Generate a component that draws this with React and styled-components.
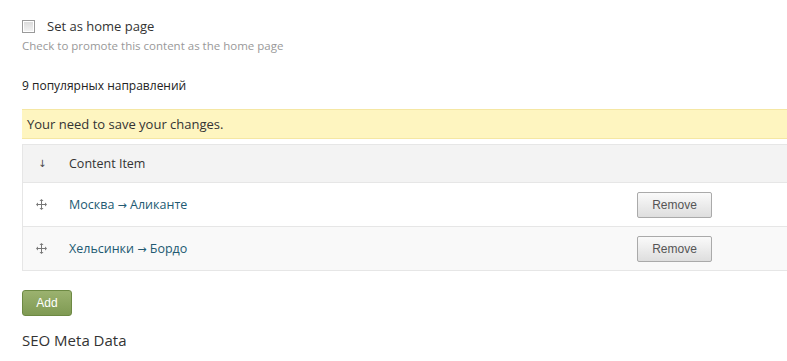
import styled, { createGlobalStyle } from "styled-components";

const GlobalStyle = createGlobalStyle`
  html, body {
    margin: 0;
    padding: 0;
    background: #fff;
    overflow: hidden;
  }
  body {
    font-family: "Open Sans", "Noto Sans", sans-serif;
    color: #333;
  }
`;

const Page = styled.div`
  padding: 17px 0 0 22px;
  width: 800px;
`;

const CheckRow = styled.label`
  display: flex;
  align-items: center;
  gap: 12px;
  height: 18px;
  font-size: 13px;
  color: #333;
`;

const Check = styled.input`
  appearance: none;
  margin: 0;
  width: 13px;
  height: 13px;
  border: 1px solid #9a9a9a;
  background: linear-gradient(#d9d9d9, #f4f4f4);
  box-shadow: inset 0 0 0 1px #fff;
  box-sizing: border-box;
`;

const Description = styled.div`
  margin-top: 2px;
  font-size: 11.5px;
  line-height: 18px;
  color: #999;
`;

const Heading = styled.div`
  margin-top: 22px;
  font-size: 12px;
  line-height: 18px;
  color: #222;
`;

const Warning = styled.div`
  margin-top: 14px;
  height: 30px;
  box-sizing: border-box;
  display: flex;
  align-items: center;
  padding-left: 5px;
  background: #fef5c0;
  border-top: 1px solid #f5e7a3;
  border-bottom: 1px solid #f5e7a3;
  font-size: 13px;
  color: #333;
`;

const Table = styled.div`
  margin-top: 5px;
  border-left: 1px solid #e6e6e6;
  border-bottom: 1px solid #e6e6e6;
`;

const Row = styled.div`
  display: flex;
  align-items: center;
  box-sizing: border-box;
  height: ${(p) => (p.$head ? 38 : 44)}px;
  background: ${(p) => p.$bg};
  border-top: 1px solid #e6e6e6;
  font-size: 12.5px;
`;

const HandleCell = styled.div`
  width: 46px;
  display: flex;
  padding-left: ${(p) => (p.$head ? 15 : 13)}px;
  box-sizing: border-box;
  color: #444;
  font-family: "DejaVu Sans", sans-serif;
  font-size: 10px;
`;

const TitleCell = styled.div`
  flex: 1;
  color: ${(p) => (p.$link ? "#225a72" : "#333")};
`;

const Arrow = styled.span`
  font-family: "DejaVu Sans", sans-serif;
  font-size: 11px;
`;

const ActionCell = styled.div`
  width: 185px;
`;

const Button = styled.button`
  font-family: "Liberation Sans", Arial, sans-serif;
  font-size: 12px;
  height: 26px;
  border-radius: 2px;
  cursor: pointer;
  padding: 0;
`;

const RemoveButton = styled(Button)`
  width: 75px;
  color: #555;
  border: 1px solid #aaa;
  background: linear-gradient(#fafafa, #dedede);
`;

const AddButton = styled(Button)`
  margin-top: 19px;
  width: 50px;
  color: #fff;
  border: 1px solid #6d8943;
  border-radius: 3px;
  background: linear-gradient(#9bb26f, #7f9a53);
`;

const SectionTitle = styled.div`
  margin-top: 14px;
  font-size: 15px;
  line-height: 20px;
  color: #333;
`;

const DragIcon = () => (
  <svg width="11" height="11" viewBox="0 0 11 11" fill="#777">
    <rect x="5" y="1" width="1" height="9" />
    <rect x="1" y="5" width="9" height="1" />
    <path d="M5.5 0 L7.5 2 L3.5 2 Z" />
    <path d="M5.5 11 L7.5 9 L3.5 9 Z" />
    <path d="M0 5.5 L2 3.5 L2 7.5 Z" />
    <path d="M11 5.5 L9 3.5 L9 7.5 Z" />
  </svg>
);

const items = [
  ["Москва", "Аликанте"],
  ["Хельсинки", "Бордо"],
];

export default function App() {
  return (
    <>
      <GlobalStyle />
      <Page>
        <CheckRow>
          <Check type="checkbox" />
          Set as home page
        </CheckRow>
        <Description>Check to promote this content as the home page</Description>
        <Heading>9 популярных направлений</Heading>
        <Warning>Your need to save your changes.</Warning>
        <Table>
          <Row $head $bg="#f3f3f3">
            <HandleCell $head>↓</HandleCell>
            <TitleCell>Content Item</TitleCell>
          </Row>
          {items.map(([from, to], i) => (
            <Row key={from} $bg={i % 2 ? "#f9f9f9" : "#fff"}>
              <HandleCell>
                <DragIcon />
              </HandleCell>
              <TitleCell $link>
                {from} <Arrow>→</Arrow> {to}
              </TitleCell>
              <ActionCell>
                <RemoveButton>Remove</RemoveButton>
              </ActionCell>
            </Row>
          ))}
        </Table>
        <AddButton>Add</AddButton>
        <SectionTitle>SEO Meta Data</SectionTitle>
      </Page>
    </>
  );
}
